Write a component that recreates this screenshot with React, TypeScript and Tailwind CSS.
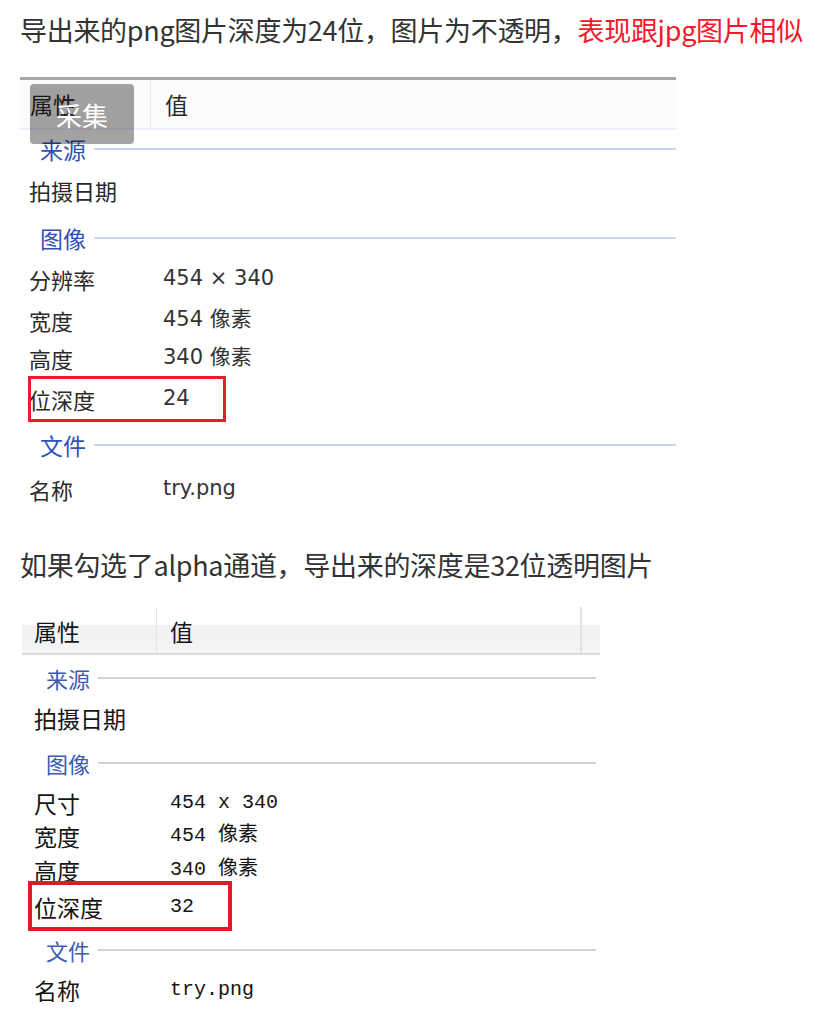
const cjk = "font-['Noto_Sans_CJK_SC',sans-serif]";

type Row =
  | { kind: "section"; label: string; mt: number }
  | { kind: "prop"; label: string; value?: string; mt: number; boxed?: boolean };

const firstRows: Row[] = [
  { kind: "section", label: "来源", mt: 1 },
  { kind: "prop", label: "拍摄日期", mt: 5 },
  { kind: "section", label: "图像", mt: 12 },
  { kind: "prop", label: "分辨率", value: "454 × 340", mt: 5 },
  { kind: "prop", label: "宽度", value: "454 像素", mt: 5 },
  { kind: "prop", label: "高度", value: "340 像素", mt: 2 },
  { kind: "prop", label: "位深度", value: "24", mt: 5, boxed: true },
  { kind: "section", label: "文件", mt: 10 },
  { kind: "prop", label: "名称", value: "try.png", mt: 8 },
];

const secondRows: Row[] = [
  { kind: "section", label: "来源", mt: 7 },
  { kind: "prop", label: "拍摄日期", mt: 8 },
  { kind: "section", label: "图像", mt: 13 },
  { kind: "prop", label: "尺寸", value: "454 x 340", mt: 8 },
  { kind: "prop", label: "宽度", value: "454 像素", mt: 1 },
  { kind: "prop", label: "高度", value: "340 像素", mt: 2 },
  { kind: "prop", label: "位深度", value: "32", mt: 5, boxed: true },
  { kind: "section", label: "文件", mt: 11 },
  { kind: "prop", label: "名称", value: "try.png", mt: 8 },
];

function FirstShot() {
  return (
    <div className="relative w-[656px] border-t-[3px] border-[#a9a9a9] bg-white text-[#2a2a2a]">
      <div className="flex h-[50px] border-b-2 border-[#e9f0fb] bg-[#fbfbfb] text-[23px]">
        <div className="flex w-[131px] items-center border-r border-[#e6edf8] pl-[10px]">属性</div>
        <div className="flex items-center pl-[14px]">值</div>
      </div>

      {firstRows.map((row, i) =>
        row.kind === "section" ? (
          <div key={i} className="flex h-[36px] items-center" style={{ marginTop: row.mt }}>
            <span className="pl-[20px] pr-[8px] text-[23px] text-[#2f52b8]">{row.label}</span>
            <div className="h-[2px] flex-1 bg-[#c9d6ec]" />
          </div>
        ) : (
          <div key={i} className="relative flex h-[36px] items-center text-[22px]" style={{ marginTop: row.mt }}>
            <span className="w-[143px] pl-[9px]">{row.label}</span>
            <span className="font-['DejaVu_Sans','Noto_Sans_CJK_SC',sans-serif] text-[21px] text-[#333]">
              {row.value}
            </span>
            {row.boxed && (
              <div className="absolute left-[8px] top-[-5px] h-[46px] w-[198px] border-[3px] border-[#e81c2b]" />
            )}
          </div>
        ),
      )}

      <div className="absolute left-[10px] top-[4px] flex h-[60px] w-[104px] items-center justify-center rounded-[4px] bg-[rgba(0,0,0,0.36)] text-[26px] text-white">
        采集
      </div>
    </div>
  );
}

function SecondShot() {
  return (
    <div className="h-[395px] w-[578px] overflow-hidden bg-white text-[#151515]">
      <div className="flex h-[48px] border-b-2 border-[#dcdcdc] bg-[linear-gradient(to_bottom,#ffffff_0%,#ffffff_38%,#f1f2f4_40%,#f3f4f6_100%)] text-[23px]">
        <div className="flex w-[135px] items-end border-r border-[#e4e4e4] pb-[5px] pl-[12px]">属性</div>
        <div className="flex w-[425px] items-end border-r-2 border-[#e2e2e2] pb-[5px] pl-[13px]">值</div>
      </div>

      {secondRows.map((row, i) =>
        row.kind === "section" ? (
          <div key={i} className="flex h-[32px] w-[574px] items-center" style={{ marginTop: row.mt }}>
            <span className="pl-[24px] pr-[8px] text-[22px] text-[#3c5db3]">{row.label}</span>
            <div className="h-[2px] flex-1 bg-[#cfd2df]" />
          </div>
        ) : (
          <div key={i} className="relative flex h-[32px] items-center text-[23px]" style={{ marginTop: row.mt }}>
            <span className="w-[148px] pl-[12px]">{row.label}</span>
            <span className="font-['Liberation_Mono','Noto_Sans_CJK_SC',monospace] text-[20px]">{row.value}</span>
            {row.boxed && (
              <div className="absolute left-[6px] top-[-10px] h-[50px] w-[204px] border-4 border-[#dd1c2a]" />
            )}
          </div>
        ),
      )}
    </div>
  );
}

export default function App() {
  return (
    <div className={`min-h-screen bg-white px-[20px] pt-[10px] ${cjk}`}>
      <p className="h-[40px] text-[27px] leading-[40px] tracking-[-0.3px] text-[#333]">
        导出来的png图片深度为24位，图片为不透明，<span className="text-[#f5182b]">表现跟jpg图片相似</span>
      </p>

      <div className="mt-[27px]">
        <FirstShot />
      </div>

      <p className="mt-[38px] h-[40px] text-[27px] leading-[40px] tracking-[-0.3px] text-[#333]">
        如果勾选了alpha通道，导出来的深度是32位透明图片
      </p>

      <div className="ml-[2px] mt-[22px]">
        <SecondShot />
      </div>
    </div>
  );
}
